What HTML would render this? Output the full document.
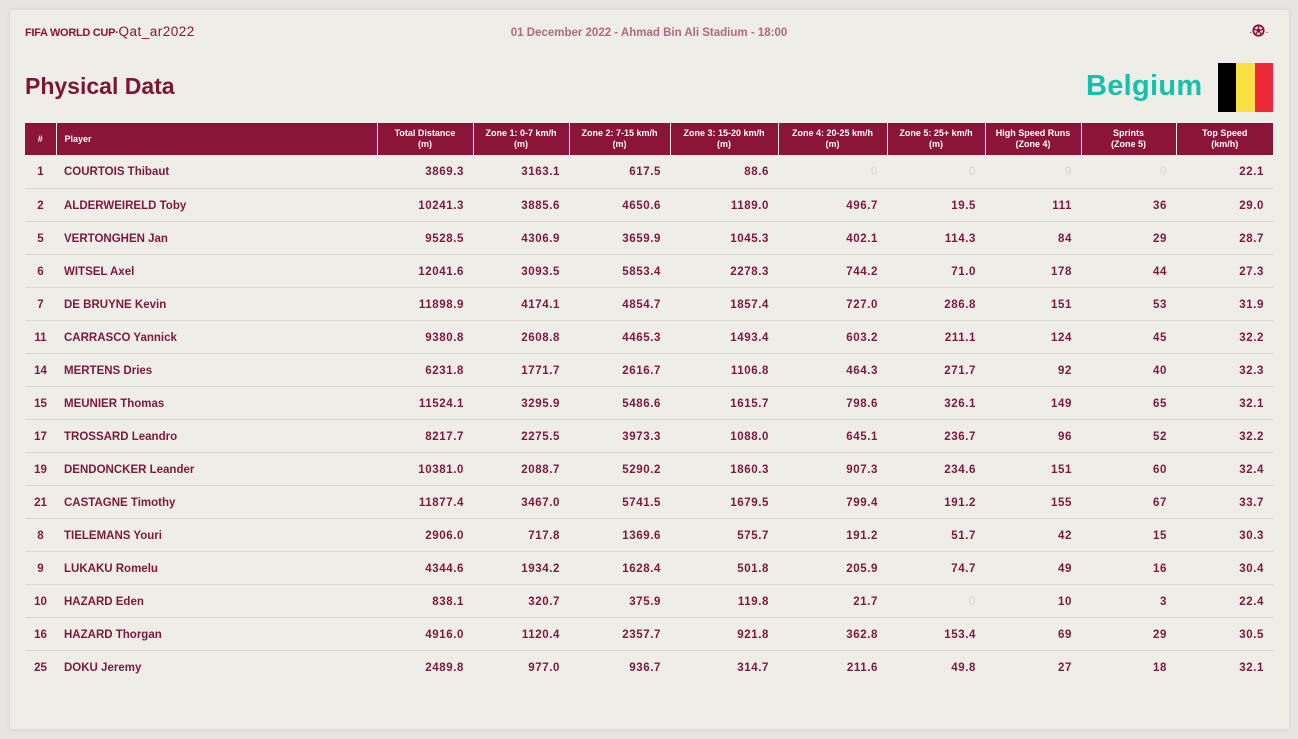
<!DOCTYPE html>
<html><head><meta charset="utf-8"><style>
*{margin:0;padding:0;box-sizing:border-box}
body{width:1298px;height:739px;background:#e6e5e2;font-family:"Liberation Sans",sans-serif;color:#7d1a3a;position:relative;overflow:hidden}
.card{position:absolute;left:10px;top:10px;width:1279px;height:719px;background:#efede7;box-shadow:0 0 3px #ccc}
.logo{position:absolute;left:25px;top:24px;font-size:11px;font-weight:bold;color:#8a1538;letter-spacing:-0.3px}
.logo span{font-weight:normal;font-size:13.5px;letter-spacing:0.5px}
.match{position:absolute;left:0;width:1298px;top:27px;text-align:center;font-size:11.5px;font-weight:bold;color:#b06a80}
.ball{position:absolute;left:1249px;top:24px;font-size:10px;color:#8a1538}
h1{position:absolute;left:25px;top:73px;font-size:23px;font-weight:bold;color:#7d1535}
.team{position:absolute;left:1086px;top:70px;font-size:29px;font-weight:bold;color:#14c2ac;letter-spacing:0.3px}
.flag{position:absolute;left:1218px;top:63px;width:55px;height:49px;display:flex}
.flag div{flex:1}
table{position:absolute;left:25px;top:123px;width:1248px;border-collapse:collapse;table-layout:fixed}
th{background:#8a1538;color:#fff;font-size:9px;font-weight:bold;height:32px;border-left:1px solid #efede7;line-height:11px;text-align:center}
th:first-child{border-left:none}
th.p{text-align:left;padding-left:8px}
td{height:33px;border-bottom:1px solid #dcd8d0;font-size:11.5px;font-weight:bold;text-align:right;padding-right:9px;letter-spacing:0.6px;padding-top:2px}
td:first-child{text-align:center;padding-right:0;letter-spacing:0}
td.n{text-align:left;padding-left:8px;letter-spacing:0}
td.z{color:#dcd7cf;font-weight:normal}
tr:last-child td{border-bottom:none}
</style></head><body>
<div class="card"></div>
<div class="logo">FIFA WORLD CUP·<span>Qat_ar2022</span></div>
<div class="match">01 December 2022 - Ahmad Bin Ali Stadium - 18:00</div>
<div class="ball">·<svg width="13" height="13" viewBox="0 0 10 10" style="vertical-align:-2px"><circle cx="5" cy="5" r="4" fill="none" stroke="#8a1538" stroke-width="1.4"/><circle cx="5" cy="5" r="1.6" fill="#8a1538"/><path d="M5 1V3.4M1.2 4 3.5 4.6M8.8 4 6.5 4.6M2.7 8.2 4 6.3M7.3 8.2 6 6.3" stroke="#8a1538" stroke-width="1"/></svg>·</div>
<h1>Physical Data</h1>
<div class="team">Belgium</div>
<div class="flag"><div style="background:#000"></div><div style="background:#fae042"></div><div style="background:#ed2939"></div></div>
<table>
<colgroup><col style="width:31px"><col style="width:321px"><col style="width:96px"><col style="width:96px"><col style="width:101px"><col style="width:108px"><col style="width:109px"><col style="width:98px"><col style="width:96px"><col style="width:95px"><col style="width:97px"></colgroup>
<tr><th>#</th><th class="p">Player</th><th>Total Distance<br>(m)</th><th>Zone 1: 0-7 km/h<br>(m)</th><th>Zone 2: 7-15 km/h<br>(m)</th><th>Zone 3: 15-20 km/h<br>(m)</th><th>Zone 4: 20-25 km/h<br>(m)</th><th>Zone 5: 25+ km/h<br>(m)</th><th>High Speed Runs<br>(Zone 4)</th><th>Sprints<br>(Zone 5)</th><th>Top Speed<br>(km/h)</th></tr>
<tr><td>1</td><td class="n">COURTOIS Thibaut</td><td>3869.3</td><td>3163.1</td><td>617.5</td><td>88.6</td><td class="z">0</td><td class="z">0</td><td class="z">9</td><td class="z">0</td><td>22.1</td></tr>
<tr><td>2</td><td class="n">ALDERWEIRELD Toby</td><td>10241.3</td><td>3885.6</td><td>4650.6</td><td>1189.0</td><td>496.7</td><td>19.5</td><td>111</td><td>36</td><td>29.0</td></tr>
<tr><td>5</td><td class="n">VERTONGHEN Jan</td><td>9528.5</td><td>4306.9</td><td>3659.9</td><td>1045.3</td><td>402.1</td><td>114.3</td><td>84</td><td>29</td><td>28.7</td></tr>
<tr><td>6</td><td class="n">WITSEL Axel</td><td>12041.6</td><td>3093.5</td><td>5853.4</td><td>2278.3</td><td>744.2</td><td>71.0</td><td>178</td><td>44</td><td>27.3</td></tr>
<tr><td>7</td><td class="n">DE BRUYNE Kevin</td><td>11898.9</td><td>4174.1</td><td>4854.7</td><td>1857.4</td><td>727.0</td><td>286.8</td><td>151</td><td>53</td><td>31.9</td></tr>
<tr><td>11</td><td class="n">CARRASCO Yannick</td><td>9380.8</td><td>2608.8</td><td>4465.3</td><td>1493.4</td><td>603.2</td><td>211.1</td><td>124</td><td>45</td><td>32.2</td></tr>
<tr><td>14</td><td class="n">MERTENS Dries</td><td>6231.8</td><td>1771.7</td><td>2616.7</td><td>1106.8</td><td>464.3</td><td>271.7</td><td>92</td><td>40</td><td>32.3</td></tr>
<tr><td>15</td><td class="n">MEUNIER Thomas</td><td>11524.1</td><td>3295.9</td><td>5486.6</td><td>1615.7</td><td>798.6</td><td>326.1</td><td>149</td><td>65</td><td>32.1</td></tr>
<tr><td>17</td><td class="n">TROSSARD Leandro</td><td>8217.7</td><td>2275.5</td><td>3973.3</td><td>1088.0</td><td>645.1</td><td>236.7</td><td>96</td><td>52</td><td>32.2</td></tr>
<tr><td>19</td><td class="n">DENDONCKER Leander</td><td>10381.0</td><td>2088.7</td><td>5290.2</td><td>1860.3</td><td>907.3</td><td>234.6</td><td>151</td><td>60</td><td>32.4</td></tr>
<tr><td>21</td><td class="n">CASTAGNE Timothy</td><td>11877.4</td><td>3467.0</td><td>5741.5</td><td>1679.5</td><td>799.4</td><td>191.2</td><td>155</td><td>67</td><td>33.7</td></tr>
<tr><td>8</td><td class="n">TIELEMANS Youri</td><td>2906.0</td><td>717.8</td><td>1369.6</td><td>575.7</td><td>191.2</td><td>51.7</td><td>42</td><td>15</td><td>30.3</td></tr>
<tr><td>9</td><td class="n">LUKAKU Romelu</td><td>4344.6</td><td>1934.2</td><td>1628.4</td><td>501.8</td><td>205.9</td><td>74.7</td><td>49</td><td>16</td><td>30.4</td></tr>
<tr><td>10</td><td class="n">HAZARD Eden</td><td>838.1</td><td>320.7</td><td>375.9</td><td>119.8</td><td>21.7</td><td class="z">0</td><td>10</td><td>3</td><td>22.4</td></tr>
<tr><td>16</td><td class="n">HAZARD Thorgan</td><td>4916.0</td><td>1120.4</td><td>2357.7</td><td>921.8</td><td>362.8</td><td>153.4</td><td>69</td><td>29</td><td>30.5</td></tr>
<tr><td>25</td><td class="n">DOKU Jeremy</td><td>2489.8</td><td>977.0</td><td>936.7</td><td>314.7</td><td>211.6</td><td>49.8</td><td>27</td><td>18</td><td>32.1</td></tr>
</table>
</body></html>
